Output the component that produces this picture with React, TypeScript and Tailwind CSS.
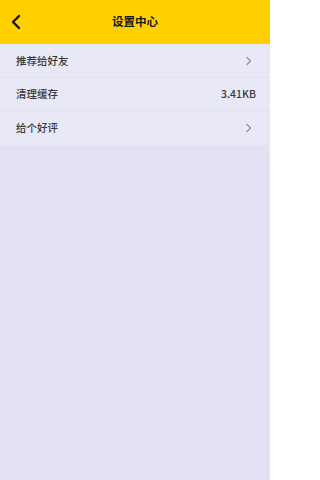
import React from "react";

const Chevron = () => (
  <svg width="6" height="10" viewBox="0 0 6 10" fill="none">
    <path d="M1 1.5l3.5 3.5-3.5 3.5" stroke="#8e8e99" strokeWidth="1.2" strokeLinecap="round" strokeLinejoin="round" />
  </svg>
);

export default function App() {
  const font = { fontFamily: '"Noto Sans CJK SC", "Noto Sans", sans-serif' };
  return (
    <div className="w-[270px] h-[480px] bg-[#e2e2f4] flex flex-col overflow-hidden" style={font}>
      <div className="h-[44px] bg-[#ffd000] flex items-center relative shrink-0">
        <div className="w-[30px] flex justify-center pl-[2px]">
          <svg width="10" height="16" viewBox="0 0 10 16" fill="none">
            <path d="M8 2L2 8l6 6" stroke="#111" strokeWidth="2.4" strokeLinecap="round" strokeLinejoin="round" />
          </svg>
        </div>
        <div className="absolute inset-0 flex items-center justify-center text-[11.5px] font-bold text-[#1a1a1a] pointer-events-none">
          设置中心
        </div>
      </div>
      <div className="flex flex-col bg-[#e8e8f6]">
        <div className="h-[34px] flex items-center justify-between pl-[16px] pr-[18px] border-b border-[#e0e0f0]">
          <span className="text-[10.5px] font-medium text-[#383838]">推荐给好友</span>
          <Chevron />
        </div>
        <div className="h-[33px] flex items-center justify-between pl-[16px] pr-[14px] border-b border-[#e0e0f0]">
          <span className="text-[10.5px] font-medium text-[#383838]">清理缓存</span>
          <span className="text-[10.5px] font-medium text-[#383838]">3.41KB</span>
        </div>
        <div className="h-[34px] flex items-center justify-between pl-[16px] pr-[18px]">
          <span className="text-[10.5px] font-medium text-[#383838]">给个好评</span>
          <Chevron />
        </div>
      </div>
    </div>
  );
}
